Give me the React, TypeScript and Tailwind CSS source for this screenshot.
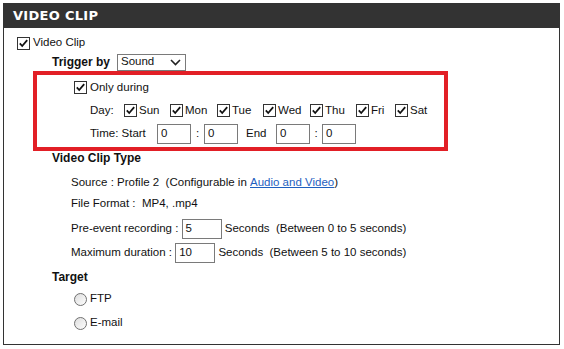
import React from "react";

const Check = () => (
  <svg width="13" height="13" viewBox="0 0 13 13" className="shrink-0">
    <rect x="0.5" y="0.5" width="12" height="12" fill="#fff" stroke="#333" />
    <path d="M2.8 6.4 L5.2 9 L10.2 3.2" fill="none" stroke="#111" strokeWidth="1.8" />
  </svg>
);

const Radio = () => (
  <svg width="13" height="13" viewBox="0 0 13 13" className="shrink-0">
    <defs>
      <linearGradient id="rg" x1="0" y1="0" x2="1" y2="1">
        <stop offset="0" stopColor="#dcdcdc" />
        <stop offset="1" stopColor="#ffffff" />
      </linearGradient>
    </defs>
    <circle cx="6.5" cy="6.5" r="6" fill="url(#rg)" stroke="#707070" />
  </svg>
);

const Box = ({ value, w }: { value: string; w: string }) => (
  <div className={`h-[20px] ${w} border border-[#7a7a7a] bg-white pl-[3px] flex items-center`}>{value}</div>
);

const days = [
  { d: "Sun", w: "w-[46px]" },
  { d: "Mon", w: "w-[47px]" },
  { d: "Tue", w: "w-[46px]" },
  { d: "Wed", w: "w-[47px]" },
  { d: "Thu", w: "w-[46px]" },
  { d: "Fri", w: "w-[39px]" },
  { d: "Sat", w: "w-[40px]" },
];

export default function App() {
  return (
    <div className="w-[564px] h-[349px] bg-white p-[3px] text-[11.5px] text-[#111] font-['Liberation_Sans',Arial,sans-serif]">
      <div className="w-[557px]">
        <div className="h-[25px] bg-[#333333] pl-[10px] flex items-center text-white font-bold text-[13px] tracking-[0.3px] font-['DejaVu_Sans',Verdana,sans-serif]">
          VIDEO CLIP
        </div>
        <div className="h-[317px] border border-t-0 border-[#333] pt-[5px] pl-[13px]">
          <div className="h-5 flex items-center gap-[3px]">
            <Check />
            <span>Video Clip</span>
          </div>
          <div className="h-[18px] flex items-center ml-[35px] gap-[7px]">
            <span className="font-bold text-[12px]">Trigger by</span>
            <div className="h-[17px] w-[69px] border border-[#7a7a7a] flex items-center justify-between pl-[3px] pr-[4px]">
              <span>Sound</span>
              <svg width="11" height="7" viewBox="0 0 11 7">
                <path d="M1 1 L5.5 5.5 L10 1" fill="none" stroke="#222" strokeWidth="1.6" />
              </svg>
            </div>
          </div>
          <div className="ml-[16px] w-[415px] h-[80px] border-4 border-[#e21f26] pt-[1px] pl-[37px]">
            <div className="h-[23px] flex items-center gap-[3px]">
              <Check />
              <span>Only during</span>
            </div>
            <div className="h-[23px] flex items-center ml-[16px]">
              <span className="w-[34px]">Day:</span>
              {days.map((x) => (
                <div key={x.d} className={`${x.w} flex items-center gap-[2px]`}>
                  <Check />
                  <span>{x.d}</span>
                </div>
              ))}
            </div>
            <div className="h-[23px] flex items-center ml-[16px]">
              <span className="w-[67px]">Time: Start</span>
              <Box value="0" w="w-[34px]" />
              <span className="w-[13px] text-center">:</span>
              <Box value="0" w="w-[34px]" />
              <span className="ml-[8px] w-[30px]">End</span>
              <Box value="0" w="w-[34px]" />
              <span className="w-[12px] text-center">:</span>
              <Box value="0" w="w-[34px]" />
            </div>
          </div>
          <div className="ml-[35px]">
            <div className="h-[14px] flex items-center font-bold text-[12px]">Video Clip Type</div>
            <div className="ml-[19px]">
              <div className="h-5 mt-[8px] flex items-center whitespace-pre">
                Source : Profile 2  (Configurable in{" "}
                <span className="text-[#1f5fbf] underline">Audio and Video</span>)
              </div>
              <div className="h-5 mt-[1px] flex items-center whitespace-pre">File Format :  MP4, .mp4</div>
              <div className="h-5 mt-[5px] flex items-center whitespace-pre">
                <span>Pre-event recording : </span>
                <Box value="5" w="w-[40px]" />
                <span> Seconds  (Between 0 to 5 seconds)</span>
              </div>
              <div className="h-5 mt-[4px] flex items-center whitespace-pre">
                <span>Maximum duration : </span>
                <Box value="10" w="w-[40px]" />
                <span> Seconds  (Between 5 to 10 seconds)</span>
              </div>
            </div>
            <div className="h-5 mt-[4px] flex items-center font-bold text-[12px]">Target</div>
            <div className="ml-[22px]">
              <div className="h-5 mt-[2px] flex items-center gap-[3px]">
                <Radio />
                <span>FTP</span>
              </div>
              <div className="h-5 mt-[4px] flex items-center gap-[3px]">
                <Radio />
                <span>E-mail</span>
              </div>
            </div>
          </div>
        </div>
      </div>
    </div>
  );
}
